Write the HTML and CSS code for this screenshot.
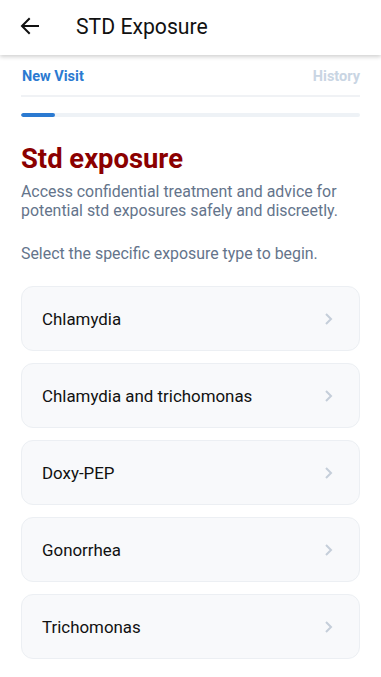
FILE: index.html
```html
<!DOCTYPE html>
<html>
<head>
<meta charset="utf-8">
<link rel="stylesheet" href="styles.css">
</head>
<body>
<header class="appbar">
  <svg class="back" width="24" height="24" viewBox="0 0 24 24"><path d="M20 12H5M11 5l-7 7 7 7" fill="none" stroke="#111" stroke-width="2" stroke-linecap="square"/></svg>
  <h1 class="title">STD Exposure</h1>
</header>
<main class="content">
  <nav class="tabs">
    <span class="tab active">New Visit</span>
    <span class="tab">History</span>
  </nav>
  <div class="progress"><div class="fill" style="width:10%"></div></div>
  <h2 class="heading">Std exposure</h2>
  <p class="desc">Access confidential treatment and advice for potential std exposures safely and discreetly.</p>
  <p class="desc prompt">Select the specific exposure type to begin.</p>
  <ul class="list">
    <li class="card"><span>Chlamydia</span><svg class="chev" width="12" height="16" viewBox="0 0 12 16"><path d="M4 3l5 5-5 5" fill="none" stroke="#c5ced9" stroke-width="2"/></svg></li>
    <li class="card"><span>Chlamydia and trichomonas</span><svg class="chev" width="12" height="16" viewBox="0 0 12 16"><path d="M4 3l5 5-5 5" fill="none" stroke="#c5ced9" stroke-width="2"/></svg></li>
    <li class="card"><span>Doxy-PEP</span><svg class="chev" width="12" height="16" viewBox="0 0 12 16"><path d="M4 3l5 5-5 5" fill="none" stroke="#c5ced9" stroke-width="2"/></svg></li>
    <li class="card"><span>Gonorrhea</span><svg class="chev" width="12" height="16" viewBox="0 0 12 16"><path d="M4 3l5 5-5 5" fill="none" stroke="#c5ced9" stroke-width="2"/></svg></li>
    <li class="card"><span>Trichomonas</span><svg class="chev" width="12" height="16" viewBox="0 0 12 16"><path d="M4 3l5 5-5 5" fill="none" stroke="#c5ced9" stroke-width="2"/></svg></li>
  </ul>
</main>
</body>
</html>
```
FILE: styles.css
```css
* { box-sizing: border-box; }
html, body { margin: 0; padding: 0; background: #fff; }
body { font-family: Roboto, "Noto Sans", sans-serif; color: #111; width: 381px; }
.appbar {
  height: 55px;
  display: flex;
  align-items: center;
  padding-left: 18px;
  background: #fff;
  box-shadow: 0 2px 4px rgba(0,0,0,0.18);
  position: relative;
  z-index: 1;
}
.back { display: block; margin-top: -3px; }
.title { margin: -2px 0 0 34px; font-size: 21.2px; font-weight: 400; color: #111; }
.content { padding: 0 21px 0 21px; }
.tabs {
  display: flex;
  justify-content: space-between;
  align-items: center;
  height: 42px;
  padding-top: 2px;
  border-bottom: 2px solid #f0f2f5;
}
.tab { font-size: 14.5px; font-weight: 700; color: #c9d5e3; }
.tab.active { color: #2b7ad1; padding-left: 1px; }
.progress {
  margin-top: 16px;
  height: 4px;
  border-radius: 2px;
  background: #eef2f6;
  overflow: hidden;
}
.fill { height: 100%; background: #2b7ad1; border-radius: 2px; }
.heading {
  margin: 26px 0 0 0;
  font-size: 27.4px;
  font-weight: 700;
  color: #8b0000;
  line-height: 32px;
}
.desc {
  margin: 7px 0 0 0;
  font-size: 15.9px;
  line-height: 19px;
  color: #64748b;
}
.prompt { margin-top: 24px; }
.list { list-style: none; margin: 23px 0 0 0; padding: 0; display: flex; flex-direction: column; gap: 12px; }
.card {
  height: 65px;
  display: flex;
  align-items: center;
  justify-content: space-between;
  padding: 0 25px 0 20px;
  background: #f8f9fb;
  border: 1px solid #eceff3;
  border-radius: 12px;
  font-size: 16.9px;
  color: #111;
}
.chev { display: block; }
```
